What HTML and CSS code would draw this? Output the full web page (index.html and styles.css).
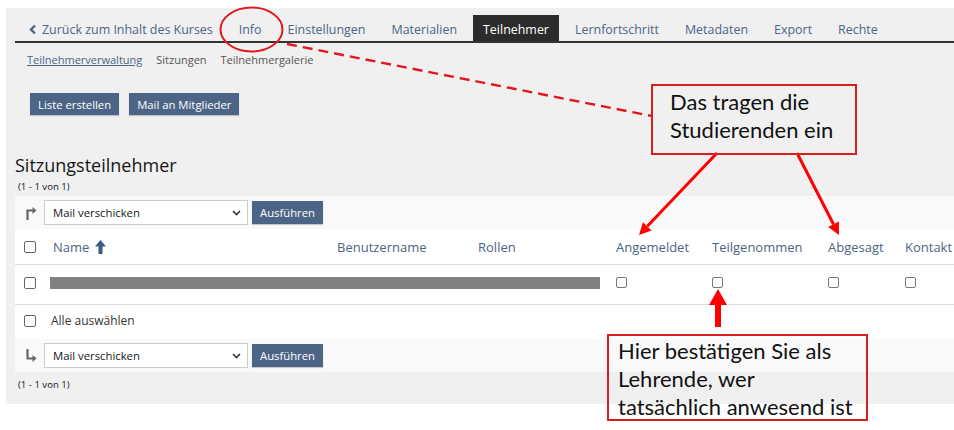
FILE: index.html
```html
<!DOCTYPE html>
<html lang="de">
<head>
    <meta charset="UTF-8">
    <title>Sitzungsteilnehmer</title>
    <link rel="stylesheet" href="styles.css">
</head>
<body>
    <div class="page">
        <ul class="tabs">
            <li class="back"><svg class="chev" width="8" height="11" viewBox="0 0 8 11"><polyline points="6,1.5 2,5.5 6,9.5" fill="none" stroke="#4c6586" stroke-width="2.4"/></svg>Zurück zum Inhalt des Kurses</li>
            <li>Info</li>
            <li>Einstellungen</li>
            <li>Materialien</li>
            <li class="active">Teilnehmer</li>
            <li>Lernfortschritt</li>
            <li>Metadaten</li>
            <li>Export</li>
            <li>Rechte</li>
        </ul>
        <ul class="subtabs">
            <li class="current">Teilnehmerverwaltung</li>
            <li>Sitzungen</li>
            <li>Teilnehmergalerie</li>
        </ul>
        <div class="actions">
            <button class="btn">Liste erstellen</button>
            <button class="btn">Mail an Mitglieder</button>
        </div>
        <h2 class="title">Sitzungsteilnehmer</h2>
        <div class="count">(1 - 1 von 1)</div>

        <div class="table">
            <div class="toolbar">
                <svg class="turn" width="12" height="14" viewBox="0 0 12 14"><path d="M2.5 14 V4.5 H8" fill="none" stroke="#666" stroke-width="2.2"/><polygon points="7.5,1 11.5,4.5 7.5,8" fill="#666"/></svg>
                <div class="select">Mail verschicken<svg width="9" height="6" viewBox="0 0 9 6"><polyline points="1,1 4.5,4.5 8,1" fill="none" stroke="#333" stroke-width="1.6"/></svg></div>
                <button class="btn small">Ausführen</button>
            </div>
            <div class="row head">
                <span class="cell"><span class="box"></span></span>
                <span class="cell">Name <svg class="sort" width="11" height="14" viewBox="0 0 11 14"><polygon points="5.5,0 11,6.5 7.5,6.5 7.5,14 3.5,14 3.5,6.5 0,6.5" fill="#3e5c82"/></svg></span>
                <span class="cell">Benutzername</span>
                <span class="cell">Rollen</span>
                <span class="cell">Angemeldet</span>
                <span class="cell">Teilgenommen</span>
                <span class="cell">Abgesagt</span>
                <span class="cell">Kontakt</span>
            </div>
            <div class="row data">
                <span class="cell"><span class="box"></span></span>
                <span class="cell wide"><span class="redacted"></span></span>
                <span class="cell"><span class="box tiny"></span></span>
                <span class="cell"><span class="box tiny"></span></span>
                <span class="cell"><span class="box tiny"></span></span>
                <span class="cell"><span class="box tiny"></span></span>
            </div>
            <div class="row all">
                <span class="cell"><span class="box"></span></span>
                <span class="cell">Alle auswählen</span>
            </div>
            <div class="toolbar">
                <svg class="turn" width="12" height="14" viewBox="0 0 12 14"><path d="M2.5 0 V9.5 H8" fill="none" stroke="#666" stroke-width="2.2"/><polygon points="7.5,6 11.5,9.5 7.5,13" fill="#666"/></svg>
                <div class="select">Mail verschicken<svg width="9" height="6" viewBox="0 0 9 6"><polyline points="1,1 4.5,4.5 8,1" fill="none" stroke="#333" stroke-width="1.6"/></svg></div>
                <button class="btn small">Ausführen</button>
            </div>
        </div>
        <div class="count bottom">(1 - 1 von 1)</div>
    </div>

    <!-- Annotationen -->
    <svg class="marks" width="954" height="430" viewBox="0 0 954 430">
        <ellipse cx="251.5" cy="29.5" rx="31" ry="22" fill="none" stroke="#e2171f" stroke-width="2"/>
        <line x1="287" y1="44" x2="652" y2="116" stroke="#e2171f" stroke-width="2.4" stroke-dasharray="10 6"/>
        <line x1="717" y1="153" x2="647.3" y2="226.3" stroke="#f00" stroke-width="3"/>
        <polygon points="639,235 651.6,230.4 642.9,222.2" fill="#f00"/>
        <line x1="797" y1="153" x2="833.5" y2="224.3" stroke="#f00" stroke-width="3"/>
        <polygon points="839,235 838.9,221.6 828.2,227" fill="#f00"/>
        <polygon points="718,289 727,305 709,305" fill="#f00"/>
        <rect x="715" y="304" width="6" height="23" fill="#f00"/>
    </svg>
    <div class="note note-top">Das tragen die<br>Studierenden ein</div>
    <div class="note note-bottom">Hier bestätigen Sie als<br>Lehrende, wer<br>tatsächlich anwesend ist</div>
</body>
</html>
```

FILE: styles.css
```css
body {
    margin: 0;
    font-family: "Open Sans", sans-serif;
    background-color: white;
    width: 954px;
    height: 430px;
    overflow: hidden;
    position: relative;
}
.page {
    margin: 8px 0 0 6px;
    padding: 7px 0 0 9px;
    height: 389px;
    background-color: #f0f0f0;
    color: #161616;
}
.tabs {
    list-style-type: none;
    margin: 0;
    padding: 0 0 0 4px;
    display: flex;
    gap: 6px;
    border-bottom: 2px solid #333;
}
.tabs li {
    padding: 3px 10px 0 10px;
    height: 23px;
    line-height: 23px;
    font-size: 12.45px;
    color: #4c6586;
}
.tabs li.active {
    background-color: #2c2c2c;
    color: white;
}
.tabs .chev {
    margin-right: 5px;
    vertical-align: -1px;
}
.subtabs {
    list-style-type: none;
    margin: 8px 0 0 0;
    padding: 0 0 0 12px;
    display: flex;
    gap: 14px;
}
.subtabs li {
    font-size: 11px;
    line-height: 17px;
    color: #555;
}
.subtabs li.current {
    color: #4c6586;
    text-decoration: underline;
}
.actions {
    display: flex;
    gap: 10px;
    margin: 25px 0 0 15px;
}
.btn {
    font-family: "Open Sans", sans-serif;
    font-size: 11.3px;
    background-color: #4c6586;
    color: white;
    border: none;
    height: 22px;
    padding: 0 8px;
    box-shadow: 0 1px 1px rgba(0, 0, 0, 0.2);
}
.title {
    font-size: 18px;
    font-weight: normal;
    line-height: 22px;
    margin: 39px 0 0 0;
}
.count {
    font-size: 9.6px;
    line-height: 12px;
    margin: 5px 0 0 3px;
}
.count.bottom {
    margin-top: 7px;
}
.table {
    margin-top: 3px;
    background-color: white;
}
.toolbar {
    display: flex;
    align-items: center;
    height: 33px;
    padding-left: 10px;
    background-color: #f9f9f9;
}
.turn {
    margin-right: 7px;
}
.select {
    width: 194px;
    height: 23px;
    padding-left: 8px;
    border: 1px solid #ccc;
    background-color: white;
    font-size: 11.3px;
    line-height: 23px;
    display: flex;
    justify-content: space-between;
    align-items: center;
}
.select svg {
    margin-right: 6px;
}
.btn.small {
    margin-left: 4px;
    height: 23px;
}
.row {
    display: grid;
    grid-template-columns: 29px 284px 141px 138px 96px 116px 77px 1fr;
    align-items: center;
    padding-left: 9px;
    font-size: 13px;
    border-top: 1px solid #ddd;
}
.row.head {
    height: 35px;
    color: #4c6586;
    border-top: none;
    border-bottom: 1px solid #ddd;
}
.row.data {
    height: 39px;
    border-top: none;
}
.row.data .cell:first-child {
    margin-top: -3px;
}
.row.all {
    height: 34px;
    font-size: 12px;
    color: #333;
}
.row.all .cell {
    margin-top: -3px;
}
.row.all .cell:last-child {
    margin-left: -2px;
}
.cell {
    white-space: nowrap;
    display: flex;
    align-items: center;
}
.sort {
    margin-left: 6px;
}
.cell.wide {
    grid-column: span 3;
}
.redacted {
    display: block;
    width: 550px;
    height: 12px;
    margin: -3px 0 0 -3px;
    background-color: #808080;
}
.box {
    display: inline-block;
    width: 10px;
    height: 10px;
    border: 1.5px solid #666;
    border-radius: 2px;
    background-color: white;
}
.box.tiny {
    width: 9px;
    height: 9px;
    border: 1.3px solid #777;
    margin-top: -4px;
}
.marks {
    position: absolute;
    top: 0;
    left: 0;
    pointer-events: none;
}
.note {
    position: absolute;
    border: 2px solid #d91e1e;
    font-family: Lato, sans-serif;
    font-size: 22px;
    line-height: 28px;
    color: #111;
}
.note-top {
    left: 651px;
    top: 84px;
    width: 185px;
    height: 65px;
    padding: 2px 0 0 17px;
}
.note-bottom {
    left: 607px;
    top: 334px;
    width: 248px;
    height: 82px;
    padding: 1px 0 0 9px;
}
```
